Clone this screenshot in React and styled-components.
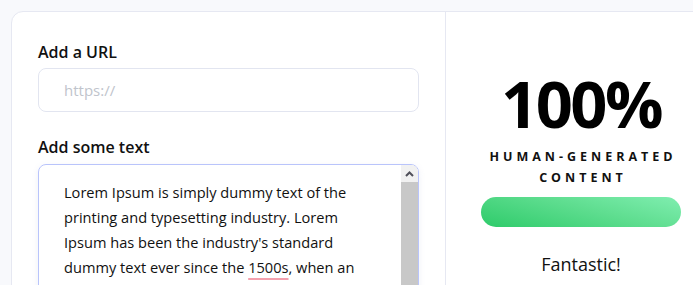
import React from "react";
import styled, { createGlobalStyle } from "styled-components";

const Global = createGlobalStyle`
  html, body {
    margin: 0;
    padding: 0;
    background: #f8f9fc;
    overflow: hidden;
  }
  body {
    font-family: "Open Sans", "Liberation Sans", sans-serif;
    color: #111;
  }
`;

const Page = styled.main`
  padding: 11px 0 0 11px;
  width: 760px;
`;

const Card = styled.section`
  display: grid;
  grid-template-columns: 434px 270px;
  background: #fff;
  border: 1px solid #e6e8f2;
  border-radius: 12px;
  height: 320px;
  overflow: hidden;
`;

const Form = styled.div`
  padding: 28px 26px 0 26px;
  border-right: 1px solid #e6e8f2;
  display: flex;
  flex-direction: column;
`;

const Label = styled.label`
  font-size: 16px;
  font-weight: 600;
  line-height: 24px;
  margin-bottom: ${(p) => p.gap || "4px"};
`;

const UrlInput = styled.input`
  box-sizing: border-box;
  height: 44px;
  width: 100%;
  border: 1px solid #e2e5f0;
  border-radius: 8px;
  padding: 0 0 0 25px;
  font-family: inherit;
  font-size: 15px;
  outline: none;
  margin-bottom: 23px;
  &::placeholder {
    color: #c0c4cc;
  }
`;

const TextBox = styled.div`
  display: flex;
  border: 1px solid #b9c4fb;
  border-radius: 8px;
  height: 140px;
  overflow: hidden;
  box-shadow: 0 2px 6px rgba(120, 130, 200, 0.12);
`;

const TextBody = styled.p`
  flex: 1;
  margin: 0;
  padding: 15px 20px 0 25px;
  font-size: 14.6px;
  line-height: 25px;
  color: #111;
`;

const Misspelt = styled.span`
  text-decoration: underline solid #f4a0ad;
  text-decoration-thickness: 2px;
  text-underline-offset: 5px;
`;

const Scrollbar = styled.div`
  width: 17px;
  display: flex;
  flex-direction: column;
  background: #f1f1f1;
`;

const ScrollButton = styled.div`
  height: 17px;
  display: flex;
  align-items: center;
  justify-content: center;
  background: #f1f1f1;
`;

const Thumb = styled.div`
  flex: 1;
  background: #c8c8c8;
`;

const Result = styled.div`
  display: flex;
  flex-direction: column;
  align-items: center;
  padding-top: 53px;
`;

const Score = styled.div`
  font-size: 65px;
  font-weight: 700;
  line-height: 76px;
  letter-spacing: -2.5px;
  color: #000;
`;

const Caption = styled.div`
  font-size: 12.5px;
  font-weight: 700;
  letter-spacing: 4px;
  line-height: 21px;
  text-align: center;
  width: 200px;
  margin-left: 4px;
  margin-top: 5px;
`;

const Meter = styled.div`
  width: 200px;
  height: 30px;
  border-radius: 15px;
  margin-top: 9px;
  background: linear-gradient(15deg, #2ecb6a 0%, #5edd8f 55%, #80eeb0 100%);
`;

const Verdict = styled.div`
  font-size: 18px;
  line-height: 24px;
  margin-top: 25px;
  color: #111;
`;

export default function App() {
  return (
    <Page>
      <Global />
      <Card>
        <Form>
          <Label>Add a URL</Label>
          <UrlInput placeholder="https://" />
          <Label gap="5px">Add some text</Label>
          <TextBox>
            <TextBody>
              Lorem Ipsum is simply dummy text of the printing and typesetting
              industry. Lorem Ipsum has been the industry's standard dummy text
              ever since the <Misspelt>1500s</Misspelt>, when an unknown printer
              took a galley of type and scrambled it to make a type specimen
              book.
            </TextBody>
            <Scrollbar>
              <ScrollButton>
                <svg width="9" height="6" viewBox="0 0 9 6">
                  <path d="M1 5 L4.5 1.5 L8 5" fill="none" stroke="#50505a" strokeWidth="2" />
                </svg>
              </ScrollButton>
              <Thumb />
            </Scrollbar>
          </TextBox>
        </Form>
        <Result>
          <Score>100%</Score>
          <Caption>HUMAN-GENERATED CONTENT</Caption>
          <Meter />
          <Verdict>Fantastic!</Verdict>
        </Result>
      </Card>
    </Page>
  );
}
